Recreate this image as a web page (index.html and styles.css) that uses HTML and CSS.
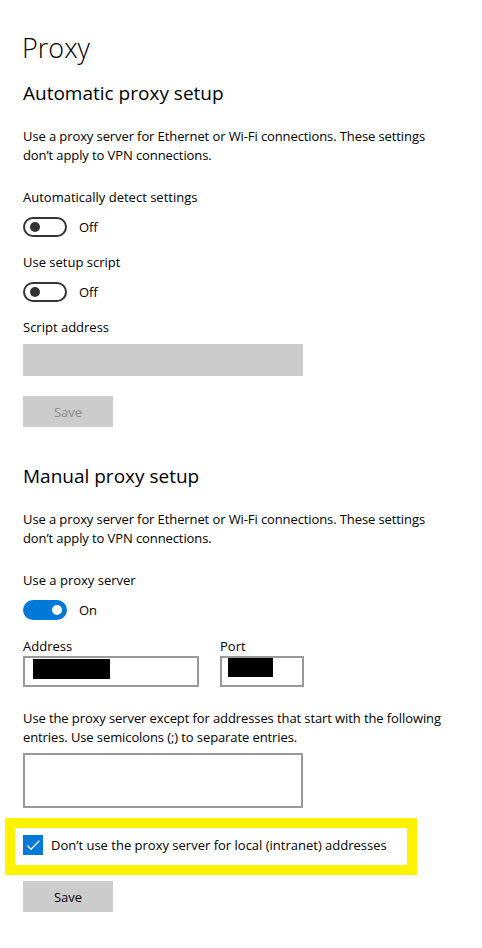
FILE: index.html
```html
<!DOCTYPE html>
<html>
<head>
<meta charset="utf-8">
<link rel="stylesheet" href="styles.css">
</head>
<body>
<div class="page">
  <h1 class="title">Proxy</h1>
  <h2 class="section-title">Automatic proxy setup</h2>
  <p class="desc">Use a proxy server for Ethernet or Wi-Fi connections. These settings don’t apply to VPN connections.</p>

  <div class="label label-first">Automatically detect settings</div>
  <div class="toggle-row"><span class="toggle off"><span class="knob"></span></span><span class="toggle-text">Off</span></div>

  <div class="label">Use setup script</div>
  <div class="toggle-row"><span class="toggle off"><span class="knob"></span></span><span class="toggle-text">Off</span></div>

  <div class="label">Script address</div>
  <div class="input-disabled"></div>
  <div class="btn btn-disabled">Save</div>

  <h2 class="section-title manual">Manual proxy setup</h2>
  <p class="desc">Use a proxy server for Ethernet or Wi-Fi connections. These settings don’t apply to VPN connections.</p>

  <div class="label label-first">Use a proxy server</div>
  <div class="toggle-row"><span class="toggle on"><span class="knob"></span></span><span class="toggle-text">On</span></div>

  <div class="addr-row">
    <div class="field addr">
      <div class="field-label">Address</div>
      <div class="input addr-input"><span class="redact redact-addr"></span></div>
    </div>
    <div class="field port">
      <div class="field-label">Port</div>
      <div class="input port-input"><span class="redact redact-port"></span></div>
    </div>
  </div>

  <p class="desc exceptions">Use the proxy server except for addresses that start with the following entries. Use semicolons (;) to separate entries.</p>
  <div class="textarea"></div>

  <div class="highlight">
    <div class="check-row">
      <span class="checkbox">
        <svg width="20" height="20" viewBox="0 0 20 20"><path d="M4 10.3 L8 14.3 L16.3 5.8" fill="none" stroke="#fff" stroke-width="1.3"/></svg>
      </span>
      <span class="check-text">Don’t use the proxy server for local (intranet) addresses</span>
    </div>
  </div>
  <div class="btn btn-save">Save</div>
</div>
</body>
</html>
```

FILE: styles.css
```css
html, body {
  margin: 0;
  padding: 0;
  background: #ffffff;
}
.page {
  width: 482px;
  height: 948px;
  padding: 28px 0 0 23px;
  box-sizing: border-box;
  font-family: "Open Sans", "Noto Sans", sans-serif;
  color: #000;
  font-size: 13px;
  overflow: hidden;
}
.title {
  margin: 0 0 0 -1px;
  font-size: 27px;
  font-weight: 300;
  line-height: 40px;
  height: 40px;
}
.section-title {
  margin: 11px 0 0 0;
  font-size: 19px;
  font-weight: 400;
  line-height: 28px;
  height: 28px;
}
.section-title.manual {
  margin-top: 35px;
}
.desc {
  margin: 20px 0 0 0;
  line-height: 19px;
  width: 420px;
  letter-spacing: -0.1px;
}
.desc.exceptions {
  margin-top: 22px;
  width: 445px;
}
.label {
  margin-top: 15px;
  line-height: 20px;
  height: 20px;
}
.label-first {
  margin-top: 22px;
}
.toggle-row {
  margin-top: 10px;
  height: 20px;
  display: flex;
  align-items: center;
}
.toggle {
  width: 44px;
  height: 20px;
  box-sizing: border-box;
  border-radius: 10px;
  display: flex;
  align-items: center;
  padding: 0 4px;
}
.toggle.off {
  border: 2px solid #333;
  justify-content: flex-start;
}
.toggle.off .knob {
  width: 10px;
  height: 10px;
  border-radius: 50%;
  background: #333;
  margin-left: 1px;
}
.toggle.on {
  background: #0078d7;
  justify-content: flex-end;
}
.toggle.on .knob {
  width: 10px;
  height: 10px;
  border-radius: 50%;
  background: #fff;
  margin-right: 1px;
}
.toggle-text {
  margin-left: 12px;
  line-height: 20px;
}
.input-disabled {
  margin-top: 7px;
  width: 280px;
  height: 32px;
  background: #cccccc;
}
.btn {
  width: 90px;
  height: 31px;
  background: #cccccc;
  display: flex;
  align-items: center;
  justify-content: center;
}
.btn-disabled {
  margin-top: 20px;
  color: #8a8a8a;
}
.btn-save {
  margin-top: 6px;
  color: #000;
}
.addr-row {
  margin-top: 16px;
  display: flex;
  gap: 21px;
}
.field-label {
  line-height: 20px;
  height: 20px;
}
.input {
  box-sizing: border-box;
  height: 31px;
  border: 2px solid #999;
  background: #fff;
  position: relative;
}
.addr-input {
  width: 176px;
}
.port-input {
  width: 84px;
}
.redact {
  position: absolute;
  background: #000;
}
.redact-addr {
  left: 8px;
  top: 1px;
  width: 77px;
  height: 20px;
}
.redact-port {
  left: 6px;
  top: 0px;
  width: 45px;
  height: 19px;
}
.textarea {
  margin-top: 6px;
  width: 280px;
  height: 55px;
  box-sizing: border-box;
  border: 2px solid #999;
}
.highlight {
  margin: 10px 0 0 -18px;
  width: 412px;
  height: 57px;
  box-sizing: border-box;
  border: 10px solid #fff200;
  padding: 7px 0 0 8px;
}
.check-row {
  display: flex;
  align-items: center;
  height: 20px;
}
.checkbox {
  width: 20px;
  height: 20px;
  background: #0078d7;
  display: block;
}
.checkbox svg {
  display: block;
}
.check-text {
  margin-left: 8px;
  line-height: 20px;
}
```
